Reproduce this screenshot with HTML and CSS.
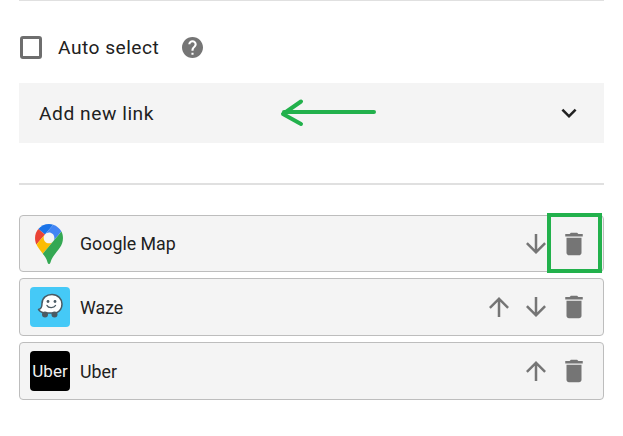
FILE: index.html
```html
<!DOCTYPE html>
<html lang="en">
<head>
  <meta charset="UTF-8">
  <title>Link settings</title>
  <link rel="stylesheet" href="styles.css">
</head>
<body>
  <div class="panel">
    <hr class="divider divider-top">

    <div class="auto-select">
      <span class="checkbox"></span>
      <span class="auto-label">Auto select</span>
      <svg class="help-icon" viewBox="2 2 20 20"><path d="M12 2C6.48 2 2 6.48 2 12s4.48 10 10 10 10-4.48 10-10S17.52 2 12 2zm1 17h-2v-2h2v2zm2.07-7.75l-.9.92C13.45 12.9 13 13.5 13 15h-2v-.5c0-1.1.45-2.1 1.17-2.83l1.24-1.26c.37-.36.59-.86.59-1.41 0-1.1-.9-2-2-2s-2 .9-2 2H8c0-2.21 1.79-4 4-4s4 1.79 4 4c0 .88-.36 1.68-.93 2.25z"/></svg>
    </div>

    <div class="add-link">
      <span>Add new link</span>
      <svg class="icon chevron" viewBox="0 0 24 24"><path d="M16.59 8.59L12 13.17 7.41 8.59 6 10l6 6 6-6z"/></svg>
    </div>

    <hr class="divider divider-list">

    <div class="link-list">
      <div class="link-row row-short">
        <span class="logo">
          <svg class="pin" viewBox="0 0 92.3 132.3">
            <path fill="#1a73e8" d="M60.2 2.2C55.8.8 51 0 46.1 0 32 0 19.3 6.4 10.8 16.5l21.8 18.3L60.2 2.2z"/>
            <path fill="#ea4335" d="M10.8 16.5C4.1 24.5 0 34.9 0 46.1c0 8.7 1.7 15.7 4.6 22l28-33.3-21.8-18.3z"/>
            <path fill="#4285f4" d="M46.2 28.5c9.8 0 17.7 7.9 17.7 17.7 0 4.3-1.6 8.3-4.2 11.4 0 0 13.9-16.6 27.5-32.7-5.6-10.8-15.3-19-27-22.7L32.6 34.8c3.3-3.8 8.1-6.3 13.6-6.3"/>
            <path fill="#fbbc04" d="M46.2 63.8c-9.8 0-17.7-7.9-17.7-17.7 0-4.3 1.5-8.3 4.1-11.3l-28 33.3c4.8 10.6 12.8 19.2 21 29.9l34.1-40.5c-3.3 3.9-8.1 6.3-13.5 6.3"/>
            <path fill="#34a853" d="M59.1 109.2c15.4-24.1 33.3-35 33.3-63 0-7.7-1.9-14.9-5.2-21.3L25.6 98c2.6 3.4 5.3 7.3 7.9 11.3 9.4 14.5 6.8 23.1 12.8 23.1s3.4-8.7 12.8-23.2"/>
          </svg>
        </span>
        <span class="link-name">Google Map</span>
        <span class="actions">
          <svg class="icon" viewBox="0 0 24 24"><path d="M20 12l-1.41-1.41L13 16.17V4h-2v12.17l-5.58-5.59L4 12l8 8 8-8z"/></svg>
          <svg class="icon icon-delete" viewBox="0 0 24 24"><path d="M6 19c0 1.1.9 2 2 2h8c1.1 0 2-.9 2-2V7H6v12zM19 4h-3.5l-1-1h-5l-1 1H5v2h14V4z"/></svg>
        </span>
      </div>

      <div class="link-row">
        <span class="logo logo-waze">
          <svg viewBox="0 0 40 40" width="40" height="40">
            <path d="M12 16.500C12 11 16.500 7.500 22 7.500C28 7.500 32 12 32 17C32 21 29.500 24.500 26 26H14C12 25.500 9.500 24.500 8.500 22.500C11 22 12 20 12 16.500z" fill="#fff" stroke="#4a5a63" stroke-width="1.500" stroke-linejoin="round"/>
            <circle cx="18" cy="14.500" r="1.400" fill="#4a5a63"/>
            <circle cx="25" cy="14.500" r="1.400" fill="#4a5a63"/>
            <path d="M17 18.500c1.300 2.800 7 2.800 8.500 0" fill="none" stroke="#4a5a63" stroke-width="1.400" stroke-linecap="round"/>
            <circle cx="15" cy="27.500" r="3" fill="#4a5a63"/>
            <circle cx="24.500" cy="27.500" r="3" fill="#4a5a63"/>
          </svg>
        </span>
        <span class="link-name">Waze</span>
        <span class="actions">
          <svg class="icon" viewBox="0 0 24 24"><path d="M4 12l1.41 1.41L11 7.83V20h2V7.830l5.580 5.590L20 12l-8-8-8 8z"/></svg>
          <svg class="icon" viewBox="0 0 24 24"><path d="M20 12l-1.41-1.41L13 16.17V4h-2v12.17l-5.58-5.59L4 12l8 8 8-8z"/></svg>
          <svg class="icon icon-delete" viewBox="0 0 24 24"><path d="M6 19c0 1.1.9 2 2 2h8c1.1 0 2-.9 2-2V7H6v12zM19 4h-3.5l-1-1h-5l-1 1H5v2h14V4z"/></svg>
        </span>
      </div>

      <div class="link-row">
        <span class="logo logo-uber">Uber</span>
        <span class="link-name">Uber</span>
        <span class="actions">
          <svg class="icon" viewBox="0 0 24 24"><path d="M4 12l1.41 1.41L11 7.83V20h2V7.830l5.580 5.590L20 12l-8-8-8 8z"/></svg>
          <svg class="icon icon-delete" viewBox="0 0 24 24"><path d="M6 19c0 1.1.9 2 2 2h8c1.1 0 2-.9 2-2V7H6v12zM19 4h-3.5l-1-1h-5l-1 1H5v2h14V4z"/></svg>
        </span>
      </div>
    </div>
  </div>

  <!-- Green annotations on top of the screenshot -->
  <svg class="note-arrow" viewBox="0 0 100 30" width="100" height="30">
    <path d="M95 14H5M22 3.500L4 16l18 10" fill="none" stroke="#22b14c" stroke-width="4" stroke-linecap="round" stroke-linejoin="round"/>
  </svg>
  <div class="note-box"></div>
</body>
</html>
```

FILE: styles.css
```css
body {
  margin: 0;
  font-family: 'Roboto', sans-serif;
  color: #212121;
  background: #fff;
  position: relative;
  overflow: hidden;
}
.panel {
  padding: 0 19px;
}
.divider {
  border: none;
  height: 2px;
  background: #e0e0e0;
  margin: 0;
}
.divider-top {
  margin-top: -1px;
}
.divider-list {
  margin-top: 40px;
}

/* Auto select */
.auto-select {
  display: flex;
  align-items: center;
  height: 22px;
  margin: 35px 0 25px 1px;
}
.checkbox {
  box-sizing: border-box;
  width: 22px;
  height: 23px;
  border: 3px solid #6e6e6e;
  border-radius: 3px;
}
.auto-label {
  font-size: 19.200px;
  letter-spacing: 0.480px;
  margin-left: 16px;
}
.help-icon {
  width: 21px;
  height: 21px;
  fill: #757575;
  margin-left: 23px;
}

/* Add new link */
.add-link {
  display: flex;
  align-items: center;
  justify-content: space-between;
  height: 60px;
  padding: 0 20px;
  background: #f4f4f4;
  font-size: 19.200px;
  letter-spacing: 0.540px;
}

/* Link list */
.link-list {
  display: flex;
  flex-direction: column;
  gap: 6px;
  margin-top: 30px;
}
.link-row {
  box-sizing: border-box;
  display: flex;
  align-items: center;
  height: 58px;
  padding: 0 14px 0 10px;
  background: #f4f4f4;
  border: 1px solid #bdbdbd;
  border-radius: 4px;
}
.row-short {
  height: 57px;
}
.logo {
  flex: none;
  display: flex;
  align-items: center;
  justify-content: center;
  width: 40px;
  height: 40px;
  border-radius: 4px;
}
.pin {
  width: 28px;
  height: 40px;
  margin-right: 2px;
}
.logo-waze {
  background: #45c9f7;
}
.logo-uber {
  background: #000;
  color: #f0f0f0;
  font-size: 17px;
}
.link-name {
  font-size: 17.800px;
  margin-left: 10px;
}
.actions {
  display: flex;
  gap: 7px;
  margin-left: auto;
}
.icon {
  width: 30px;
  height: 30px;
  fill: #757575;
}
.icon-delete {
  margin-left: 1px;
}
.chevron.icon {
  fill: #212121;
}

/* Annotations */
.note-arrow {
  position: absolute;
  left: 279px;
  top: 98px;
}
.note-box {
  position: absolute;
  left: 547px;
  top: 213px;
  box-sizing: border-box;
  width: 55px;
  height: 60px;
  border: 4.500px solid #22b14c;
}
```
